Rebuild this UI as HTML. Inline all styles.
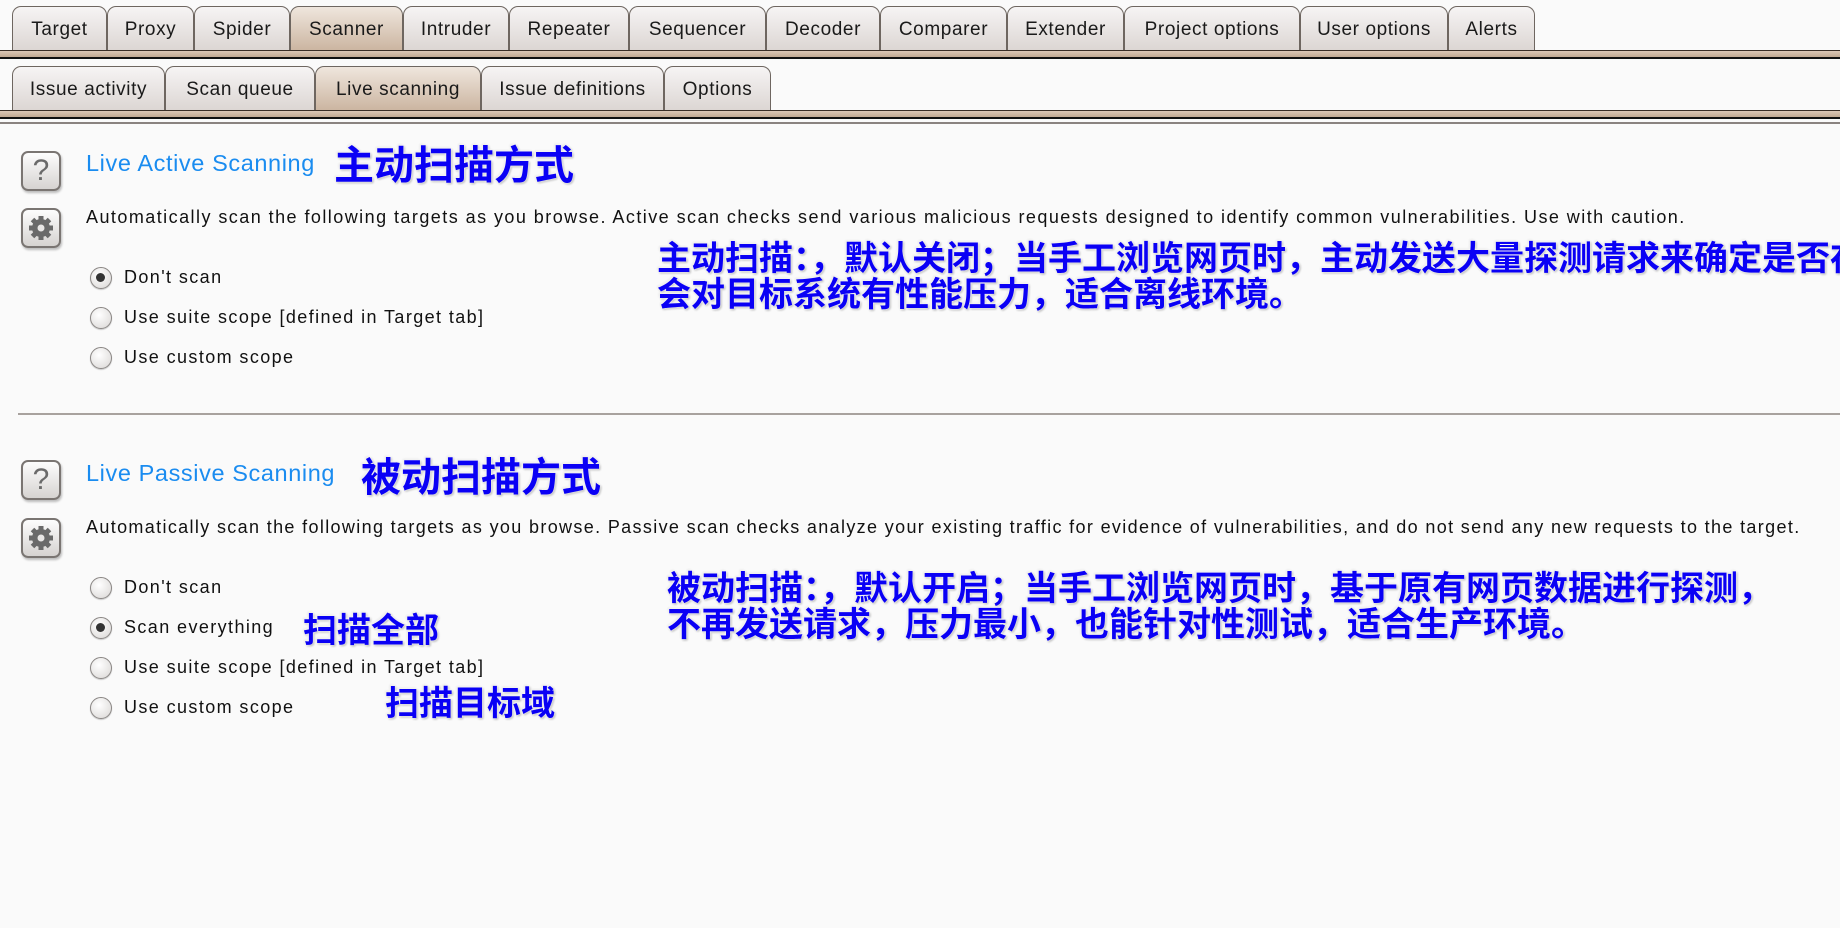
<!DOCTYPE html>
<html><head><meta charset="utf-8"><style>
*{margin:0;padding:0;box-sizing:border-box}
body{width:1840px;height:928px;overflow:hidden;background:#fafafa;font-family:"Liberation Sans","DejaVu Sans",sans-serif;color:#111;position:relative}
.bar{position:absolute;left:0;width:1840px}
.tab{position:absolute;height:44px;border:1.5px solid #6e6660;border-bottom:none;border-radius:9px 9px 0 0;background:linear-gradient(#f6f4f4,#dcd6d3);font-size:19px;letter-spacing:.6px;text-align:center;line-height:46px;color:#1a1a1a}
.tab.sel{background:linear-gradient(#efe6dd,#c9b29d);}
.strip{position:absolute;left:0;width:1840px;height:9px;background:linear-gradient(#dcc8b6,#c2a992);border-top:1.5px solid #3a2e26;border-bottom:2.5px solid #111}
.ibox{position:absolute;width:40px;height:40px;border:2px solid #7a7572;border-radius:7px;background:linear-gradient(#fdfdfd,#d6d3d1);box-shadow:1px 2px 2px rgba(0,0,0,.25);text-align:center}
.q{font-size:30px;color:#6a6a6a;line-height:36px}
.title{position:absolute;font-size:23.5px;color:#1a8cf0;letter-spacing:.6px}
.desc{position:absolute;font-size:18px;letter-spacing:1.45px;color:#111;white-space:nowrap}
.radio{position:absolute;left:90px;width:22px;height:22px;border-radius:50%;border:1.5px solid #8a8684;background:radial-gradient(circle at 40% 35%,#fff,#d9d6d4);box-shadow:0 1px 1px rgba(0,0,0,.2)}
.radio.on::after{content:"";position:absolute;left:5px;top:5px;width:9px;height:9px;border-radius:50%;background:#333}
.lab{position:absolute;left:124px;font-size:18px;letter-spacing:1.4px;color:#111}
.cn{position:absolute;font-family:"Noto Sans CJK SC","WenQuanYi Zen Hei",sans-serif;font-weight:bold;color:#0a00f5;white-space:nowrap;text-shadow:0 0 2px #fff,0 0 3px #fff,1px 1px 2px #888,-1px -1px 2px #ddd}
.clip{position:absolute;overflow:hidden}
</style></head><body>
<div class="tab" style="left:12px;top:6px;width:95px">Target</div>
<div class="tab" style="left:107px;top:6px;width:87px">Proxy</div>
<div class="tab" style="left:194px;top:6px;width:96px">Spider</div>
<div class="tab sel" style="left:290px;top:6px;width:113px;height:47px">Scanner</div>
<div class="tab" style="left:403px;top:6px;width:106px">Intruder</div>
<div class="tab" style="left:509px;top:6px;width:120px">Repeater</div>
<div class="tab" style="left:629px;top:6px;width:137px">Sequencer</div>
<div class="tab" style="left:766px;top:6px;width:114px">Decoder</div>
<div class="tab" style="left:880px;top:6px;width:127px">Comparer</div>
<div class="tab" style="left:1007px;top:6px;width:117px">Extender</div>
<div class="tab" style="left:1124px;top:6px;width:176px">Project options</div>
<div class="tab" style="left:1300px;top:6px;width:148px">User options</div>
<div class="tab" style="left:1448px;top:6px;width:87px">Alerts</div>
<div class="strip" style="top:50px"></div>

<div class="tab" style="left:12px;top:66px;width:153px">Issue activity</div>
<div class="tab" style="left:165px;top:66px;width:150px">Scan queue</div>
<div class="tab sel" style="left:315px;top:66px;width:166px;height:47px">Live scanning</div>
<div class="tab" style="left:481px;top:66px;width:183px">Issue definitions</div>
<div class="tab" style="left:664px;top:66px;width:107px">Options</div>
<div class="strip" style="top:110px"></div>
<div class="bar" style="top:122px;height:2px;background:#8a8380"></div>

<div class="ibox" style="left:21px;top:151px"><div class="q">?</div></div>
<div class="ibox" style="left:21px;top:208px"><svg width="36" height="36" viewBox="0 0 36 36"><g fill="#6a6a6a"><circle cx="18" cy="18" r="9"/><g stroke="#6a6a6a" stroke-width="5"><line x1="18" y1="6" x2="18" y2="30"/><line x1="6" y1="18" x2="30" y2="18"/><line x1="9.5" y1="9.5" x2="26.5" y2="26.5"/><line x1="26.5" y1="9.5" x2="9.5" y2="26.5"/></g></g><circle cx="18" cy="18" r="3.5" fill="#e8e6e5"/></svg></div>
<div class="title" style="left:86px;top:150px">Live Active Scanning</div>
<div class="cn" style="left:334px;top:137px;font-size:40px;line-height:50px">主动扫描方式</div>
<div class="desc" style="left:86px;top:207px">Automatically scan the following targets as you browse. Active scan checks send various malicious requests designed to identify common vulnerabilities. Use with caution.</div>
<div class="radio on" style="top:267px"></div><div class="lab" style="top:267px">Don't scan</div>
<div class="radio" style="top:307px"></div><div class="lab" style="top:307px">Use suite scope [defined in Target tab]</div>
<div class="radio" style="top:347px"></div><div class="lab" style="top:347px">Use custom scope</div>
<div class="clip" style="left:640px;top:230px;width:1200px;height:90px"><div class="cn" style="left:17px;top:8px;font-size:34px;line-height:36px">主动扫描：，默认关闭；当手工浏览网页时，主动发送大量探测请求来确定是否存在漏洞<br>会对目标系统有性能压力，适合离线环境。</div></div>

<div class="bar" style="top:413px;left:18px;height:2px;background:#a8a29e"></div>

<div class="ibox" style="left:21px;top:460px"><div class="q">?</div></div>
<div class="ibox" style="left:21px;top:518px"><svg width="36" height="36" viewBox="0 0 36 36"><g fill="#6a6a6a"><circle cx="18" cy="18" r="9"/><g stroke="#6a6a6a" stroke-width="5"><line x1="18" y1="6" x2="18" y2="30"/><line x1="6" y1="18" x2="30" y2="18"/><line x1="9.5" y1="9.5" x2="26.5" y2="26.5"/><line x1="26.5" y1="9.5" x2="9.5" y2="26.5"/></g></g><circle cx="18" cy="18" r="3.5" fill="#e8e6e5"/></svg></div>
<div class="title" style="left:86px;top:460px">Live Passive Scanning</div>
<div class="cn" style="left:361px;top:449px;font-size:40px;line-height:50px">被动扫描方式</div>
<div class="desc" style="left:86px;top:517px;letter-spacing:1.35px">Automatically scan the following targets as you browse. Passive scan checks analyze your existing traffic for evidence of vulnerabilities, and do not send any new requests to the target.</div>
<div class="radio" style="top:577px"></div><div class="lab" style="top:577px">Don't scan</div>
<div class="radio on" style="top:617px"></div><div class="lab" style="top:617px">Scan everything</div>
<div class="radio" style="top:657px"></div><div class="lab" style="top:657px">Use suite scope [defined in Target tab]</div>
<div class="radio" style="top:697px"></div><div class="lab" style="top:697px">Use custom scope</div>
<div class="cn" style="left:303px;top:608px;font-size:34px;line-height:40px">扫描全部</div>
<div class="cn" style="left:385px;top:681px;font-size:34px;line-height:40px">扫描目标域</div>
<div class="cn" style="left:667px;top:568px;font-size:34px;line-height:36px">被动扫描：，默认开启；当手工浏览网页时，基于原有网页数据进行探测，<br>不再发送请求，压力最小，也能针对性测试，适合生产环境。</div>
</body></html>
